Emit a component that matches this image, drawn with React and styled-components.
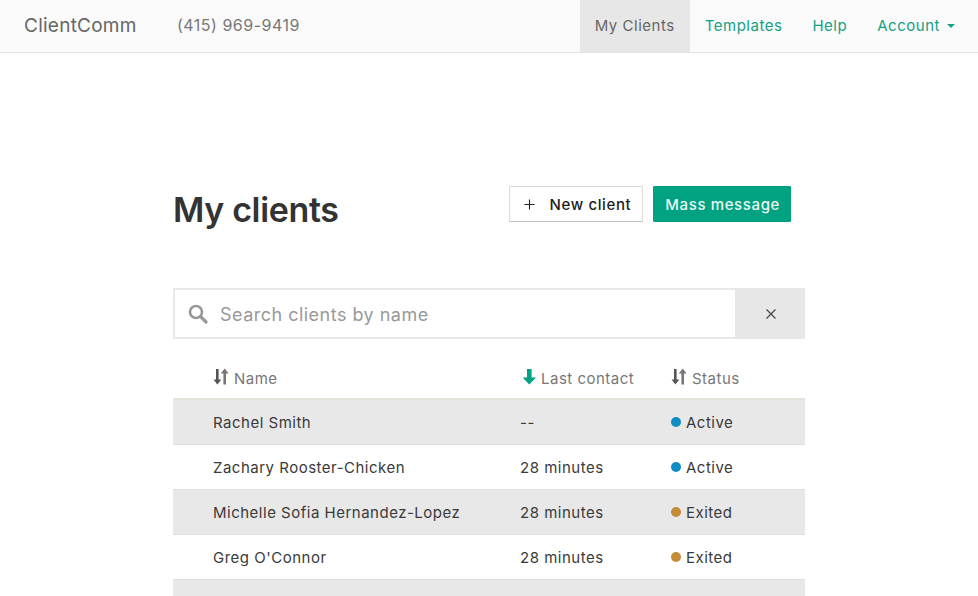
import React from 'react';
import styled, { createGlobalStyle } from 'styled-components';

const GlobalStyle = createGlobalStyle`
  html, body {
    margin: 0;
    height: 596px;
    overflow: hidden;
    background: #fff;
    font-family: Inter, "Liberation Sans", sans-serif;
    color: #333;
  }
  * { box-sizing: border-box; }
`;

const Navbar = styled.nav`
  display: flex;
  align-items: stretch;
  justify-content: space-between;
  height: 53px;
  background: #fafafa;
  border-bottom: 1px solid #e3e3dc;
`;

const NavLeft = styled.div`
  display: flex;
  align-items: center;
  padding-bottom: 2px;
`;

const Brand = styled.a`
  width: 177px;
  padding-left: 24px;
  font-size: 19px;
  font-weight: 400;
  letter-spacing: 0.25px;
  color: #666;
`;

const Phone = styled.span`
  font-size: 16px;
  letter-spacing: 0.5px;
  color: #777;
`;

const NavRight = styled.div`
  display: flex;
  align-items: stretch;
  padding-right: 8px;
`;

const NavItem = styled.a`
  display: flex;
  align-items: center;
  gap: 7px;
  padding: 0 15px 2px;
  font-size: 15px;
  letter-spacing: 0.52px;
  color: ${p => (p.$active ? '#666' : '#16a085')};
  background: ${p => (p.$active ? '#e7e7e7' : 'transparent')};
`;

const Caret = styled.span`
  width: 0;
  height: 0;
  margin-top: 2px;
  border-left: 4px solid transparent;
  border-right: 4px solid transparent;
  border-top: 4px solid #16a085;
`;

const Main = styled.main`
  width: 632px;
  margin-left: 173px;
  padding-top: 133px;
`;

const Head = styled.div`
  display: flex;
  justify-content: space-between;
  align-items: flex-start;
  height: 102px;
  padding-right: 14px;
`;

const Title = styled.h1`
  margin: 3px 0 0;
  font-size: 34px;
  line-height: 42px;
  font-weight: 600;
  letter-spacing: -0.35px;
  color: #333;
`;

const Buttons = styled.div`
  display: flex;
  gap: 10px;
`;

const Button = styled.button`
  display: flex;
  align-items: center;
  height: 36px;
  padding: 0 ${p => (p.$primary ? 10 : 11)}px 0 11px;
  font-family: inherit;
  font-size: 15px;
  font-weight: 500;
  letter-spacing: 0.62px;
  border-radius: 1px;
  border: 1px solid ${p => (p.$primary ? '#00a281' : '#dcdcd5')};
  border-bottom-color: ${p => (p.$primary ? '#00a281' : '#c4c4bd')};
  color: ${p => (p.$primary ? '#e9f7f3' : '#1c1c1c')};
  background: ${p => (p.$primary ? '#00a281' : '#fff')};
`;

const PlusIcon = styled.svg`
  width: 11px;
  height: 11px;
  margin: 1px 15px 0 3px;
`;

const SearchBar = styled.div`
  display: flex;
  height: 51px;
  border: 2px solid #e8e8e8;
  border-radius: 1px;
`;

const SearchField = styled.div`
  flex: 1;
  display: flex;
  align-items: center;
  gap: 12px;
  padding-left: 13px;
`;

const SearchText = styled.span`
  padding-top: 1px;
  font-size: 18px;
  letter-spacing: 0.48px;
  color: #999;
`;

const ClearButton = styled.div`
  display: flex;
  align-items: center;
  justify-content: center;
  width: 70px;
  margin: -2px;
  padding-left: 1px;
  background: #e7e7e7;
`;

const Row = styled.div`
  display: grid;
  grid-template-columns: 307px 151px 1fr;
  align-items: center;
  height: 45px;
  padding-left: 40px;
  font-size: 15px;
  letter-spacing: 0.5px;
  color: #3a3a3a;
  background: ${p => (p.$shaded ? '#e8e8e8' : '#fff')};
  border-bottom: 1px solid #dfdfd8;
`;

const HeaderRow = styled.div`
  display: grid;
  grid-template-columns: 307px 151px 1fr;
  align-items: center;
  height: 61px;
  padding: 20px 0 0 40px;
  font-size: 15px;
  letter-spacing: 0.5px;
  color: #777;
  border-bottom: 2px solid #e3e3d8;
`;

const HeaderCell = styled.div`
  display: flex;
  align-items: center;
  gap: ${p => (p.$sorted ? 3 : 5)}px;
  margin-left: ${p => (p.$sorted ? 2 : 0)}px;
`;

const SortSvg = styled.svg`
  width: 16px;
  height: 17px;
  margin-top: -4px;
`;

const StatusCell = styled.div`
  display: flex;
  align-items: center;
  gap: 5px;
`;

const Dot = styled.span`
  width: 10px;
  height: 10px;
  border-radius: 50%;
  background: ${p => (p.$exited ? '#c48c37' : '#0f8cc4')};
`;

const SortBoth = () => (
  <SortSvg viewBox="0 0 16 17">
    <path d="M3 1h2.6v10.6H8.4L4.3 16.5 0.6 11.6H3z" fill="#555" />
    <path d="M10.4 16.5h2.6V5.6h2.6L11.7 0.6 7.8 5.6h2.6z" fill="#777" />
  </SortSvg>
);

const SortDown = () => (
  <SortSvg viewBox="0 0 16 17">
    <path d="M5 1h4.6v8.4h4.4L7.3 16.5 0.6 9.4H5z" fill="#00a281" />
  </SortSvg>
);

const clients = [
  { name: 'Rachel Smith', contact: '--', status: 'Active' },
  { name: 'Zachary Rooster-Chicken', contact: '28 minutes', status: 'Active' },
  { name: 'Michelle Sofia Hernandez-Lopez', contact: '28 minutes', status: 'Exited' },
  { name: "Greg O'Connor", contact: '28 minutes', status: 'Exited' },
];

function App() {
  return (
    <>
      <GlobalStyle />
      <Navbar>
        <NavLeft>
          <Brand>ClientComm</Brand>
          <Phone>(415) 969-9419</Phone>
        </NavLeft>
        <NavRight>
          <NavItem $active>My Clients</NavItem>
          <NavItem>Templates</NavItem>
          <NavItem>Help</NavItem>
          <NavItem>Account <Caret /></NavItem>
        </NavRight>
      </Navbar>
      <Main>
        <Head>
          <Title>My clients</Title>
          <Buttons>
            <Button>
              <PlusIcon viewBox="0 0 11 11">
                <path d="M5.5 0.5v10M0.5 5.5h10" stroke="#222" strokeWidth="1.1" fill="none" />
              </PlusIcon>
              New client
            </Button>
            <Button $primary>Mass message</Button>
          </Buttons>
        </Head>
        <SearchBar>
          <SearchField>
            <svg width="20" height="20" viewBox="0 0 20 20">
              <circle cx="8" cy="8" r="6" stroke="#999" strokeWidth="2.6" fill="none" />
              <path d="M12.6 12.6l5.4 5.4" stroke="#999" strokeWidth="3.2" strokeLinecap="round" />
            </svg>
            <SearchText>Search clients by name</SearchText>
          </SearchField>
          <ClearButton>
            <svg width="10" height="10" viewBox="0 0 10 10">
              <path d="M0.5 0.5l9 9M9.5 0.5l-9 9" stroke="#444" strokeWidth="1.2" fill="none" />
            </svg>
          </ClearButton>
        </SearchBar>
        <HeaderRow>
          <HeaderCell><SortBoth />Name</HeaderCell>
          <HeaderCell $sorted><SortDown />Last contact</HeaderCell>
          <HeaderCell><SortBoth />Status</HeaderCell>
        </HeaderRow>
        {clients.map((c, i) => (
          <Row key={c.name} $shaded={i % 2 === 0}>
            <div>{c.name}</div>
            <div>{c.contact}</div>
            <StatusCell>
              <Dot $exited={c.status === 'Exited'} />
              {c.status}
            </StatusCell>
          </Row>
        ))}
        <Row $shaded />
      </Main>
    </>
  );
}

export default App;
